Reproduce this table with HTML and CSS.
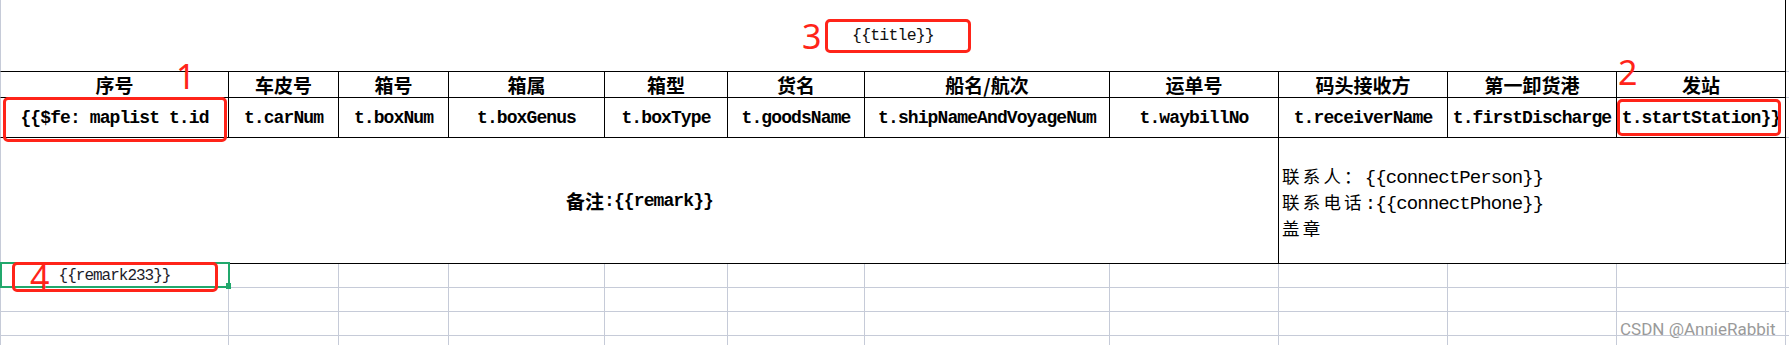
FILE: index.html
```html
<!DOCTYPE html>
<html lang="zh-CN">
<head>
<meta charset="utf-8">
<title>Excel template</title>
<link rel="stylesheet" href="styles.css">
</head>
<body>
<div class="page">
  <div class="sheet">
    <!-- title row -->
    <div class="c first k title"><span class="title-text">{{title}}</span></div>
    <div class="c ext"></div>

    <!-- header row -->
    <div class="c first k hd">序号</div>
    <div class="c k hd">车皮号</div>
    <div class="c k hd">箱号</div>
    <div class="c k hd">箱属</div>
    <div class="c k hd">箱型</div>
    <div class="c k hd">货名</div>
    <div class="c k hd">船名/航次</div>
    <div class="c k hd">运单号</div>
    <div class="c k hd">码头接收方</div>
    <div class="c k hd">第一卸货港</div>
    <div class="c k hd">发站</div>
    <div class="c ext"></div>

    <!-- data row -->
    <div class="c first k dt">{{$fe: maplist t.id</div>
    <div class="c k dt">t.carNum</div>
    <div class="c k dt">t.boxNum</div>
    <div class="c k dt">t.boxGenus</div>
    <div class="c k dt">t.boxType</div>
    <div class="c k dt">t.goodsName</div>
    <div class="c k dt">t.shipNameAndVoyageNum</div>
    <div class="c k dt">t.waybillNo</div>
    <div class="c k dt">t.receiverName</div>
    <div class="c k dt">t.firstDischarge</div>
    <div class="c k dt">t.startStation}}</div>
    <div class="c ext"></div>

    <!-- remark row -->
    <div class="c first k dt remark"><span class="cj">备注</span>:{{remark}}</div>
    <div class="c k contact">
      <div class="ln"><span class="cj">联系人：</span><span class="lt">{{connectPerson}}</span></div>
      <div class="ln"><span class="cj">联系电话</span><span class="lt">:{{connectPhone}}</span></div>
      <div class="ln"><span class="cj">盖章</span></div>
    </div>
    <div class="c ext"></div>

    <!-- empty grid rows -->
    <div class="c first"><span class="r233">{{remark233}}</span></div>
    <div class="c"></div><div class="c"></div><div class="c"></div><div class="c"></div><div class="c"></div>
    <div class="c"></div><div class="c"></div><div class="c"></div><div class="c"></div><div class="c"></div>
    <div class="c ext"></div>

    <div class="c first"></div>
    <div class="c"></div><div class="c"></div><div class="c"></div><div class="c"></div><div class="c"></div>
    <div class="c"></div><div class="c"></div><div class="c"></div><div class="c"></div><div class="c"></div>
    <div class="c ext"></div>

    <div class="c first"></div>
    <div class="c"></div><div class="c"></div><div class="c"></div><div class="c"></div><div class="c"></div>
    <div class="c"></div><div class="c"></div><div class="c"></div><div class="c"></div><div class="c"></div>
    <div class="c ext"></div>

    <div class="c first"></div>
    <div class="c"></div><div class="c"></div><div class="c"></div><div class="c"></div><div class="c"></div>
    <div class="c"></div><div class="c"></div><div class="c"></div><div class="c"></div><div class="c"></div>
    <div class="c ext"></div>
  </div>

  <!-- overlays: selection + annotations -->
  <div class="sel"></div>

  <div class="mark m1"></div>
  <div class="mark m2"></div>
  <div class="mark m3"></div>
  <div class="mark m4"></div>

  <div class="num n1">1</div>
  <div class="num n2">2</div>
  <div class="num n3">3</div>
  <div class="num n4">4</div>

  <div class="wm">CSDN @AnnieRabbit</div>
</div>
</body>
</html>
```

FILE: styles.css
```css
html, body {
  margin: 0;
  padding: 0;
  background: #ffffff;
}

body {
  width: 1789px;
  height: 345px;
  overflow: hidden;
}

.page {
  position: relative;
  width: 1789px;
  height: 345px;
  overflow: hidden;
}

.sheet {
  display: grid;
  grid-template-columns: 229px 110px 110px 156px 123px 137px 245px 169px 169px 169px 169px 3px;
  grid-template-rows: 72px 26px 40px 126px 24px 24px 24px 24px;
}

.c {
  box-sizing: border-box;
  border-right: 1px solid #c6cbd8;
  border-bottom: 1px solid #c6cbd8;
  display: flex;
  align-items: center;
  justify-content: center;
  white-space: nowrap;
  color: #000000;
}

.first {
  border-left: 1px solid #c6cbd8;
}

.k {
  border-right-color: #000000;
  border-bottom-color: #000000;
}

.ext {
  border-right: 0;
}

.title {
  grid-column: span 11;
}

.remark {
  grid-column: span 8;
}

.contact {
  grid-column: span 3;
  flex-direction: column;
  align-items: flex-start;
  justify-content: center;
  padding-left: 3px;
  padding-top: 3px;
}

.title-text {
  font-family: "Liberation Mono", monospace;
  font-size: 16.5px;
  letter-spacing: -0.8px;
  color: #111111;
}

.hd {
  font-family: "Noto Sans CJK SC", sans-serif;
  font-size: 19px;
  font-weight: 700;
}

.dt {
  font-family: "Liberation Mono", "Noto Sans CJK SC", monospace;
  font-size: 18px;
  font-weight: 700;
  letter-spacing: -0.9px;
}

.cj {
  font-family: "Noto Sans CJK SC", sans-serif;
  font-size: 19px;
  letter-spacing: 0;
}

.ln {
  height: 26px;
  font-family: "Liberation Mono", monospace;
  font-size: 19px;
  line-height: 26px;
  white-space: nowrap;
}

.ln .cj {
  font-size: 17.5px;
  letter-spacing: 3.2px;
}

.lt {
  font-family: "Liberation Mono", monospace;
  font-size: 19px;
  letter-spacing: -0.9px;
}

.r233 {
  font-family: "Liberation Mono", monospace;
  font-size: 16px;
  letter-spacing: -1px;
  color: #1c1c2a;
}

/* overlays */
.sel {
  position: absolute;
  left: 0;
  top: 262px;
  width: 230px;
  height: 26px;
  box-sizing: border-box;
  border: 2px solid #21a86c;
}

.sel::after {
  content: "";
  position: absolute;
  right: -3px;
  bottom: -3px;
  width: 5px;
  height: 6px;
  background: #21a86c;
}

.mark {
  position: absolute;
  box-sizing: border-box;
  border: 3px solid #ff2419;
  border-radius: 5px;
}

.m1 { left: 3px; top: 97px; width: 224px; height: 45px; }
.m2 { left: 1617px; top: 99px; width: 164px; height: 37px; }
.m3 { left: 825px; top: 19px; width: 146px; height: 34px; }
.m4 { left: 12px; top: 262px; width: 206px; height: 30px; }

.num {
  position: absolute;
  font-family: "Noto Sans", sans-serif;
  font-size: 34px;
  line-height: 1;
  color: #ff2419;
}

.n1 { left: 176px; top: 59px; }
.n2 { left: 1618px; top: 55px; }
.n3 { left: 802px; top: 19px; }
.n4 { left: 30px; top: 260px; }

.wm {
  position: absolute;
  left: 1620px;
  top: 321px;
  font-family: Roboto, sans-serif;
  font-size: 17px;
  line-height: 1;
  color: #9a9a9a;
}
```
